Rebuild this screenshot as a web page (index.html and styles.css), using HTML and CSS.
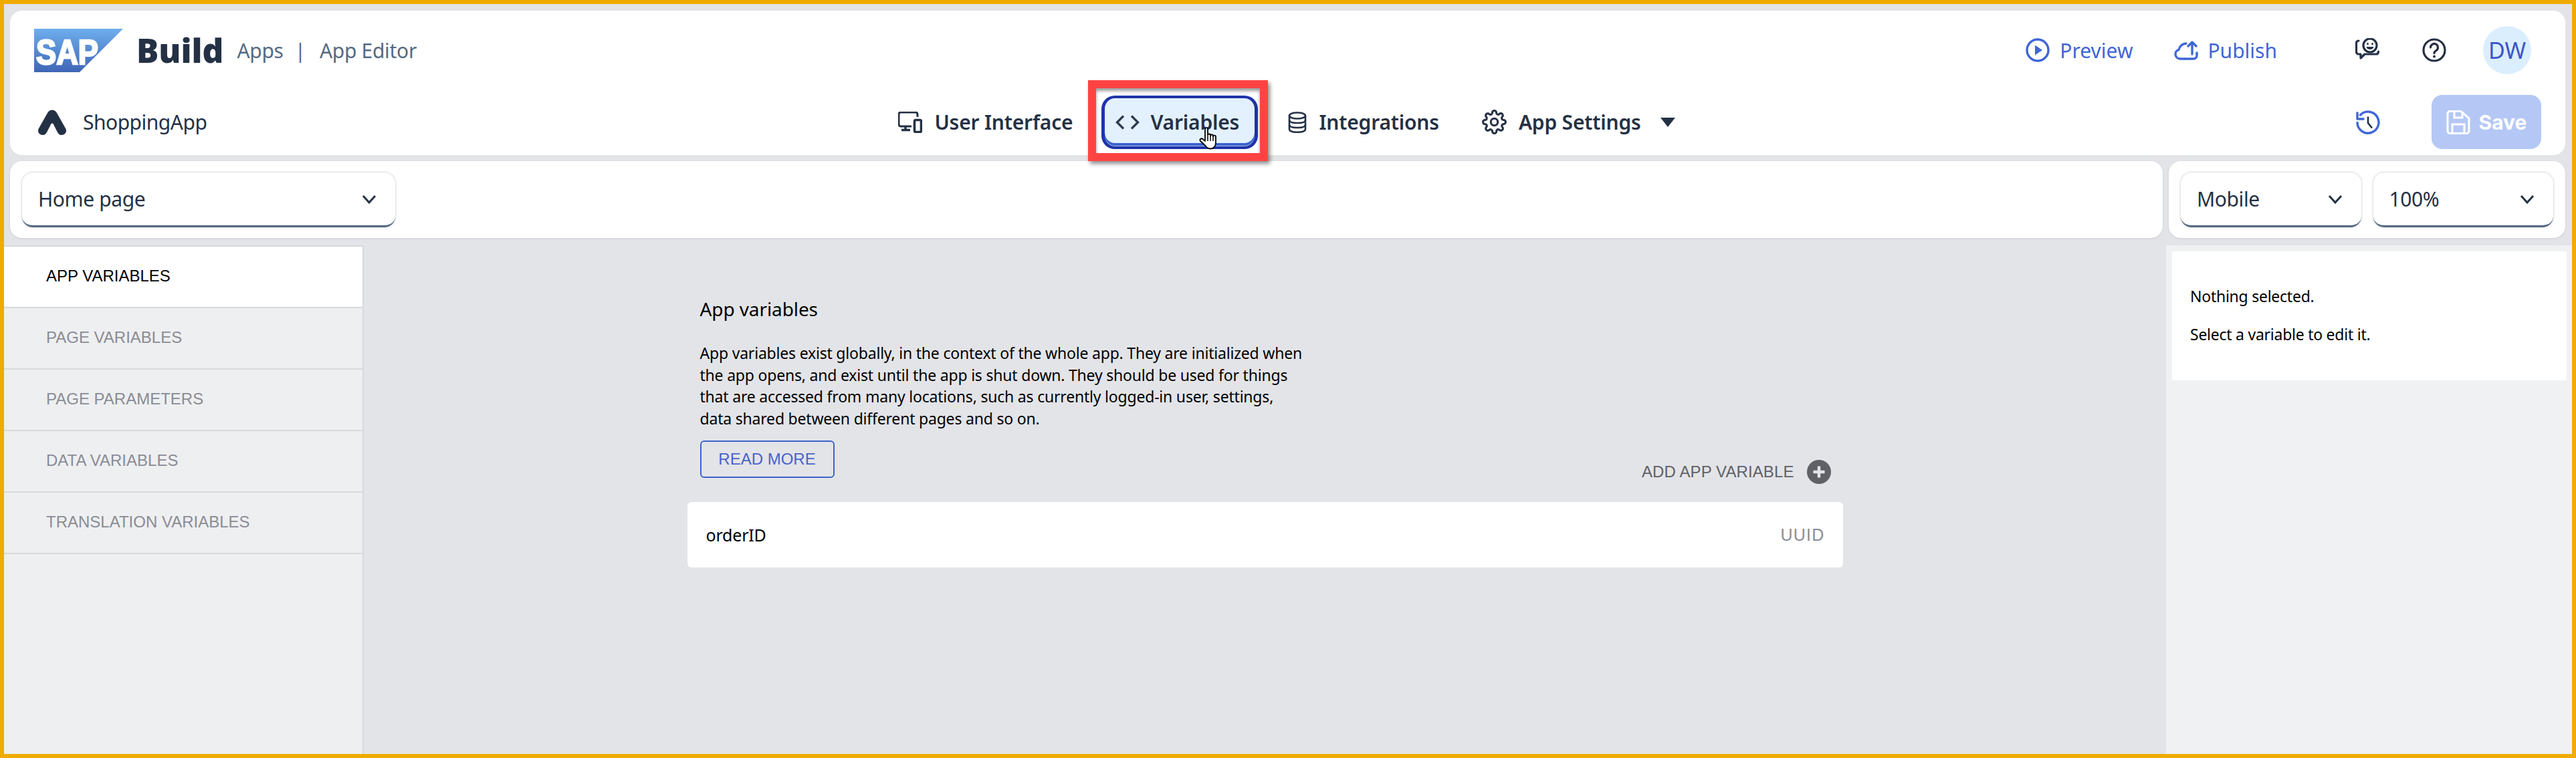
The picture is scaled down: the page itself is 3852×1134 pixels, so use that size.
FILE: index.html

```html
<!DOCTYPE html>
<html lang="en">
<head>
    <meta charset="UTF-8">
    <title>SAP Build Apps - App Editor</title>
    <link rel="stylesheet" href="styles.css">
</head>
<body>
<div class="frame">

    <header class="topbar">
        <div class="row-brand">
            <svg class="sap-logo" viewBox="0 0 133 65">
                <defs>
                    <linearGradient id="sapfill" x1="0" y1="0" x2="0" y2="1">
                        <stop offset="0" stop-color="#6eaeee"/>
                        <stop offset="1" stop-color="#3f66b6"/>
                    </linearGradient>
                </defs>
                <polygon points="0,0 133,0 68,65 0,65" fill="url(#sapfill)"/>
                <text x="3" y="53" class="sap-word" textLength="93" lengthAdjust="spacingAndGlyphs">SAP</text>
            </svg>
            <span class="build">Build</span>
            <span class="crumb crumb-apps">Apps</span>
            <span class="crumb crumb-sep">|</span>
            <span class="crumb">App Editor</span>

            <div class="actions">
                <a class="action">
                    <svg class="icon-36" viewBox="0 0 36 36"><circle cx="18" cy="18" r="16" fill="none" stroke="#3f66d6" stroke-width="3.4"/><path d="M14 10.5v15l11-7.500z" fill="#3f66d6"/></svg>
                    Preview
                </a>
                <a class="action action-publish">
                    <svg class="icon-36" viewBox="0 0 36 36"><path d="M16 31H9a7 7 0 0 1-2-13.700C8.500 12 12 8.500 18 8" fill="none" stroke="#3f66d6" stroke-width="3.400" stroke-linecap="round"/><path d="M16 31h13a5 5 0 0 0 5-5v-4M27 24V7M21 12l6-6 6 6" fill="none" stroke="#3f66d6" stroke-width="3.400" stroke-linecap="round" stroke-linejoin="round"/></svg>
                    Publish
                </a>
                <svg class="icon-36 feedback" viewBox="0 0 36 36">
                    <path d="M5 4C3 4 1.500 5.500 1.500 7.500v13c0 2 1.500 3.500 3.500 3.500h3v6l6-6h17c2 0 3.500-1 3.500-4" fill="none" stroke="#243145" stroke-width="3.200" stroke-linecap="round" stroke-linejoin="round"/>
                    <circle cx="22" cy="11" r="10" fill="none" stroke="#243145" stroke-width="3.200"/>
                    <circle cx="18.500" cy="8.500" r="1.500" fill="#243145"/><circle cx="25.500" cy="8.500" r="1.500" fill="#243145"/>
                    <path d="M16.500 13c1 3 3 4 5.500 4s4.500-1 5.500-4z" fill="#243145"/>
                </svg>
                <svg class="icon-36 help" viewBox="0 0 36 36">
                    <circle cx="18" cy="18" r="16" fill="none" stroke="#243145" stroke-width="3.200"/>
                    <path d="M12.500 14a5.500 5.500 0 1 1 8.500 4.600c-2 1.200-3 2-3 4" fill="none" stroke="#243145" stroke-width="3.200" stroke-linecap="round"/>
                    <circle cx="18" cy="27.500" r="2" fill="#243145"/>
                </svg>
                <div class="avatar">DW</div>
            </div>
        </div>

        <div class="row-nav">
            <div class="app-name">
                <svg class="app-icon" viewBox="0 0 44 38"><path d="M15 5C18 -1 26 -1 29 5L42 28C45 33 41 38 36 38 33 38 31 36 29.500 33L24 22C23 20 21 20 20 22L14.500 33C13 36 11 38 8 38 3 38 -1 33 2 28Z" fill="#243145"/></svg>
                ShoppingApp
            </div>

            <nav class="nav">
                <a class="nav-item">
                    <svg class="icon-nav" viewBox="0 0 36 32"><path d="M20 22H4c-1.700 0-3-1.300-3-3V4c0-1.700 1.300-3 3-3h22c1.700 0 3 1.300 3 3v4" fill="none" stroke="#243145" stroke-width="3"/><path d="M11 22v5M5 27.500h13" fill="none" stroke="#243145" stroke-width="3.400"/><rect x="24.500" y="12.500" width="10" height="18" rx="2" fill="none" stroke="#243145" stroke-width="3.600"/></svg>
                    User Interface
                </a>
                <a class="nav-item is-active">
                    <svg class="icon-nav" viewBox="0 0 36 32"><path d="M12 6.500L2.500 16 12 25.500M24 6.500L33.500 16 24 25.500" fill="none" stroke="#2f3b50" stroke-width="3.400"/></svg>
                    Variables
                </a>
                <a class="nav-item nav-item-data">
                    <svg class="icon-db" viewBox="0 0 28 32"><g fill="none" stroke="#243145" stroke-width="2.600"><ellipse cx="14" cy="6" rx="12" ry="4.500"/><path d="M2 6v20c0 3 5 4.700 12 4.700S26 29 26 26V6"/><path d="M2 12.500c0 3 5 4.500 12 4.500s12-1.500 12-4.500M2 19.500c0 3 5 4.500 12 4.500s12-1.500 12-4.500"/></g></svg>
                    Integrations
                </a>
                <a class="nav-item">
                    <svg class="icon-gear" viewBox="0 0 24 24"><circle cx="12" cy="12" r="3.400" fill="none" stroke="#243145" stroke-width="2"/><path d="M19.400 15a1.650 1.650 0 0 0 .33 1.820l.06.06a2 2 0 0 1 0 2.830 2 2 0 0 1-2.830 0l-.06-.06a1.650 1.650 0 0 0-1.820-.33 1.650 1.650 0 0 0-1 1.510V21a2 2 0 0 1-2 2 2 2 0 0 1-2-2v-.09A1.650 1.650 0 0 0 9 19.400a1.650 1.650 0 0 0-1.820.33l-.06.06a2 2 0 0 1-2.830 0 2 2 0 0 1 0-2.830l.06-.06a1.650 1.650 0 0 0 .33-1.820 1.650 1.650 0 0 0-1.510-1H3a2 2 0 0 1-2-2 2 2 0 0 1 2-2h.09A1.650 1.650 0 0 0 4.600 9a1.650 1.650 0 0 0-.33-1.820l-.06-.06a2 2 0 0 1 0-2.830 2 2 0 0 1 2.830 0l.06.06a1.650 1.650 0 0 0 1.820.33H9a1.650 1.650 0 0 0 1-1.510V3a2 2 0 0 1 2-2 2 2 0 0 1 2 2v.09a1.650 1.650 0 0 0 1 1.510 1.650 1.650 0 0 0 1.820-.33l.06-.06a2 2 0 0 1 2.830 0 2 2 0 0 1 0 2.830l-.06.06a1.650 1.650 0 0 0-.33 1.820V9a1.650 1.650 0 0 0 1.510 1H21a2 2 0 0 1 2 2 2 2 0 0 1-2 2h-.09a1.650 1.650 0 0 0-1.510 1z" fill="none" stroke="#243145" stroke-width="2"/></svg>
                    App Settings
                    <span class="caret"></span>
                </a>
                <!-- annotation from the screenshot -->
                <div class="callout"></div>
                <svg class="hand" viewBox="0 0 32 34">
                    <path d="M9 3c0-2.500 4-2.500 4 0v9c0-2 4-2 4 0v1c0-2 4-2 4 0v1c0-2 4-2 4 .500v9c0 5-3 9-8 9-4 0-6-2-8-5L2 21c-2-2 1-5 3.500-3L9 21z" fill="#fff" stroke="#000" stroke-width="1.800" stroke-linejoin="round"/>
                    <path d="M13 13v8M17 13v8M21 14v7" stroke="#000" stroke-width="1.500"/>
                </svg>
            </nav>

            <div class="nav-right">
                <svg class="icon-36" viewBox="0 0 36 36"><path d="M6.500 7A16 16 0 1 1 2 18.500" fill="none" stroke="#3f66d6" stroke-width="3.400" stroke-linecap="round"/><path d="M2 2.500v10.500h10.500" fill="none" stroke="#3f66d6" stroke-width="3.400" stroke-linejoin="round"/><path d="M18 9.500V19l6 7.500" fill="none" stroke="#243145" stroke-width="2.600"/></svg>
                <button class="save">
                    <svg class="icon-36" viewBox="0 0 36 36"><path d="M5 1.500h17L34 12v19c0 2-1.500 3.500-3.500 3.500h-25C3.500 34.500 2 33 2 31V5c0-2 1.500-3.500 3-3.500z" fill="none" stroke="#fff" stroke-width="3"/><path d="M12 2v9h12V3M9 34V21h18v13" fill="none" stroke="#fff" stroke-width="3"/></svg>
                    Save
                </button>
            </div>
        </div>
    </header>

    <div class="toolbar">
        <div class="tool-card">
            <div class="select select-page"><span>Home page</span><svg class="chev" viewBox="0 0 22 14"><path d="M2 2l9 10 9-10" fill="none" stroke="#243145" stroke-width="3"/></svg></div>
        </div>
        <div class="tool-card tool-card-right">
            <div class="select"><span>Mobile</span><svg class="chev" viewBox="0 0 22 14"><path d="M2 2l9 10 9-10" fill="none" stroke="#243145" stroke-width="3"/></svg></div>
            <div class="select"><span>100%</span><svg class="chev" viewBox="0 0 22 14"><path d="M2 2l9 10 9-10" fill="none" stroke="#243145" stroke-width="3"/></svg></div>
        </div>
    </div>

    <main class="workspace">
        <ul class="tabs">
            <li class="tab is-current">APP VARIABLES</li>
            <li class="tab">PAGE VARIABLES</li>
            <li class="tab">PAGE PARAMETERS</li>
            <li class="tab">DATA VARIABLES</li>
            <li class="tab">TRANSLATION VARIABLES</li>
        </ul>

        <section class="content">
            <div class="content-head">
                <div class="intro">
                    <h2 class="intro-title">App variables</h2>
                    <p class="intro-text">App variables exist globally, in the context of the whole app. They are initialized when<br>the app opens, and exist until the app is shut down. They should be used for things<br>that are accessed from many locations, such as currently logged-in user, settings,<br>data shared between different pages and so on.</p>
                    <a class="read-more">READ MORE</a>
                </div>
                <a class="add-var">
                    ADD APP VARIABLE
                    <svg class="add-icon" viewBox="0 0 36 36"><circle cx="18" cy="18" r="18" fill="#5f6167"/><path d="M18 9.500v17M9.500 18h17" stroke="#e3e4e8" stroke-width="4.400"/></svg>
                </a>
            </div>
            <div class="var-row">
                <span class="var-name">orderID</span>
                <span class="var-type">UUID</span>
            </div>
        </section>

        <aside class="inspector">
            <div class="inspector-box">
                <p>Nothing selected.</p>
                <p>Select a variable to edit it.</p>
            </div>
        </aside>
    </main>

</div>
</body>
</html>
```

FILE: styles.css

```css
*{
    margin: 0;
    padding: 0;
    box-sizing: border-box;
}
body{
    font-family: "Noto Sans", "Open Sans", sans-serif;
    color: #243145;
}
.frame{
    width: 3852px;
    height: 1134px;
    border: 6px solid #f0ab00;
    background: #e3e4e8;
    display: flex;
    flex-direction: column;
    overflow: hidden;
}

/* top bar */
.topbar{
    margin: 10px 10px 0 9px;
    height: 216px;
    background: #fff;
    border-radius: 18px;
    padding: 23px 0 9px;
    display: flex;
    flex-direction: column;
    gap: 31px;
}
.row-brand{
    height: 72px;
    padding: 0 51px 0 36px;
    display: flex;
    align-items: center;
}
.sap-logo{
    width: 133px;
    height: 65px;
}
.sap-word{
    font-family: "Liberation Sans", sans-serif;
    font-weight: 700;
    font-size: 52px;
    fill: #fff;
    stroke: #fff;
    stroke-width: 2.500px;
}
.build{
    margin-left: 20px;
    font-size: 49.500px;
    font-weight: 900;
    color: #243145;
    line-height: 72px;
}
.crumb{
    font-size: 30px;
    letter-spacing: -.3px;
    color: #556b82;
}
.crumb-apps{
    margin-left: 20px;
}
.crumb-sep{
    margin: 0 21px 0 17px;
}
.actions{
    margin-left: auto;
    display: flex;
    align-items: center;
}
.action{
    display: flex;
    align-items: center;
    gap: 15px;
    font-size: 30px;
    color: #3f66d6;
}
.action-publish{
    margin-left: 62px;
    gap: 14px;
}
.icon-36{
    width: 36px;
    height: 36px;
    flex: none;
}
.feedback{
    margin-left: 117px;
}
.help{
    margin-left: 64px;
}
.avatar{
    margin-left: 55px;
    width: 72px;
    height: 72px;
    border-radius: 50%;
    background: #dbeefe;
    color: #3c55c8;
    font-size: 34px;
    text-align: center;
    line-height: 72px;
}

.row-nav{
    height: 81px;
    padding: 0 39px 0 36px;
    display: grid;
    grid-template-columns: 1fr auto 1fr;
    align-items: center;
}
.app-name{
    display: flex;
    align-items: center;
    gap: 24px;
    padding-left: 5px;
    font-size: 30px;
    letter-spacing: -.5px;
}
.app-icon{
    width: 44px;
    height: 38px;
}
.nav{
    position: relative;
    display: flex;
    align-items: center;
    gap: 22px;
}
.nav-item{
    height: 80px;
    padding: 0 21px;
    display: flex;
    align-items: center;
    gap: 18px;
    font-size: 30px;
    font-weight: 600;
    letter-spacing: -.2px;
    color: #243145;
}
.nav-item-data{
    margin-left: 2px;
}
.nav-item.is-active{
    width: 234px;
    gap: 16px;
    background: #e3f1fe;
    border: solid #1f33a8;
    border-width: 4px 5px;
    border-radius: 20px;
    padding: 0 16px;
    box-shadow: inset 0 -1px 0 #a9c0f0, inset 0 -5px 0 #3c64cc;
}
.icon-nav{
    width: 36px;
    height: 32px;
}
.icon-db{
    width: 28px;
    height: 32px;
}
.icon-gear{
    width: 37px;
    height: 37px;
}
.caret{
    margin-left: 11px;
    border-left: 11px solid transparent;
    border-right: 11px solid transparent;
    border-top: 14px solid #243145;
}
.callout{
    position: absolute;
    left: 305px;
    top: -23px;
    width: 269px;
    height: 121px;
    border: 12px solid #ff4343;
    box-shadow: 3px 4px 6px rgba(0,0,0,.45), inset 0 4px 5px rgba(0,0,0,.4);
    pointer-events: none;
}
.hand{
    position: absolute;
    left: 471px;
    top: 47px;
    width: 32px;
    height: 34px;
}
.nav-right{
    margin-right: -3px;
    display: flex;
    align-items: center;
    justify-content: flex-end;
    gap: 77px;
}
.save{
    width: 164px;
    height: 81px;
    border: 0;
    border-radius: 16px;
    background: #b5c8f5;
    color: #fff;
    font-family: "Inter", sans-serif;
    font-size: 30px;
    font-weight: 700;
    display: flex;
    align-items: center;
    justify-content: center;
    gap: 13px;
}

/* dropdown row */
.toolbar{
    margin: 9px 10px 0 9px;
    height: 115px;
    display: flex;
    gap: 9px;
}
.tool-card{
    flex: 1;
    background: #fff;
    border-radius: 18px;
    padding: 17px 18px;
    display: flex;
    box-shadow: 0 1px 3px rgba(80,90,110,.15);
}
.tool-card-right{
    flex: none;
    width: 593px;
    gap: 18px;
}
.select{
    width: 270px;
    height: 82px;
    padding: 0 28px 0 24px;
    background: #fff;
    border-radius: 16px;
    border-bottom: 3px solid #556b82;
    box-shadow: 0 0 3px rgba(80,90,110,.45);
    display: flex;
    align-items: center;
    justify-content: space-between;
    font-size: 30px;
    letter-spacing: -.4px;
}
.select-page{
    width: 558px;
}
.chev{
    width: 22px;
    height: 14px;
}

/* main area */
.workspace{
    flex: 1;
    margin-top: 11px;
    display: grid;
    grid-template-columns: 538px 1fr 607px;
    min-height: 0;
}
.tabs{
    list-style: none;
    background: #eeeff1;
    border-top: 2px solid #d8d9dd;
    border-right: 2px solid #d8d9dd;
}
.tab{
    height: 92px;
    padding: 0 0 2px 63px;
    border-bottom: 2px solid #d8d9dd;
    display: flex;
    align-items: center;
    font-family: "Liberation Sans", sans-serif;
    font-size: 24px;
    color: #8a8c94;
}
.tab.is-current{
    background: #fff;
    color: #000;
}
.content{
    width: 1728px;
    margin: 0 auto;
    padding-top: 75px;
}
.content-head{
    display: flex;
    justify-content: space-between;
    align-items: flex-end;
}
.intro{
    padding: 0 0 36px 19px;
}
.intro-title{
    font-size: 28px;
    font-weight: 400;
    letter-spacing: -.1px;
    line-height: 40px;
    color: #000;
}
.intro-text{
    margin-top: 30px;
    font-size: 23px;
    letter-spacing: -.2px;
    line-height: 32.600px;
    color: #000;
}
.read-more{
    display: block;
    margin-top: 17px;
    width: 201px;
    height: 56px;
    border: 2px solid #3c64cc;
    border-radius: 6px;
    font-family: "Liberation Sans", sans-serif;
    font-size: 24px;
    line-height: 52px;
    text-align: center;
    color: #4a63c8;
}
.add-var{
    display: flex;
    align-items: center;
    gap: 19px;
    margin: 0 18px 27px 0;
    font-family: "Liberation Sans", sans-serif;
    font-size: 24px;
    letter-spacing: .1px;
    color: #5f6167;
}
.add-icon{
    width: 36px;
    height: 36px;
}
.var-row{
    height: 98px;
    padding: 0 27px 0 28px;
    background: #fff;
    border-radius: 6px;
    display: flex;
    align-items: center;
    justify-content: space-between;
}
.var-name{
    font-size: 25px;
    letter-spacing: -.2px;
    color: #000;
}
.var-type{
    font-family: "Liberation Sans", sans-serif;
    font-size: 25px;
    letter-spacing: 1.200px;
    color: #8a8c94;
}
.inspector{
    background: #eff1f3;
    padding: 9px 8px 0 9px;
}
.inspector-box{
    height: 193px;
    padding: 49px 0 0 27px;
    background: #fff;
    color: #000;
    font-size: 23px;
    letter-spacing: -.25px;
}
.inspector-box p{
    line-height: 36px;
    margin-bottom: 21px;
}
```
